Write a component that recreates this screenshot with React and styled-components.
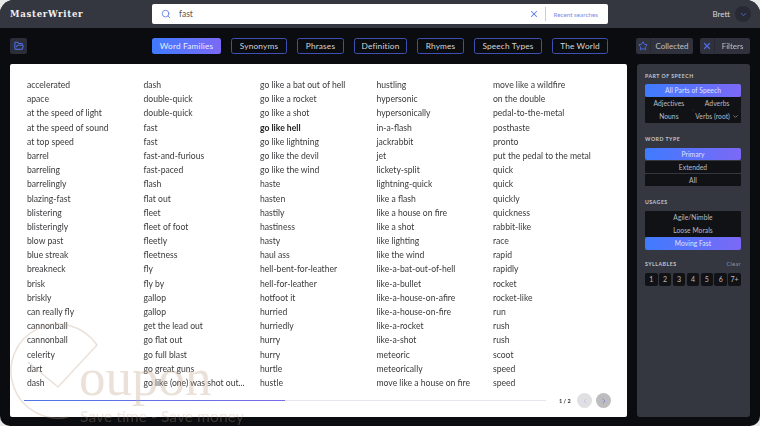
import React from 'react';
import styled, { createGlobalStyle } from 'styled-components';
import { Search, X, ChevronDown, ChevronLeft, ChevronRight, Star, FolderOpen } from 'lucide-react';

const GlobalStyle = createGlobalStyle`
  html, body {
    margin: 0;
    padding: 0;
    background: #e9e9ea;
  }
  * {
    box-sizing: border-box;
  }
`;

const Frame = styled.div`
  position: relative;
  width: 760px;
  height: 426px;
  overflow: hidden;
  display: flex;
  flex-direction: column;
  background: #0b0c0f;
  border-radius: 14px 14px 10px 10px;
  font-family: Lato, 'Open Sans', sans-serif;
  filter: blur(0.35px);
`;

const TopBar = styled.header`
  height: 28px;
  flex: none;
  display: flex;
  align-items: center;
  padding: 0 9px 0 10px;
  background: #343740;
`;

const Logo = styled.div`
  width: 142px;
  font-family: 'DejaVu Serif', serif;
  font-size: 8.6px;
  font-weight: 700;
  letter-spacing: 0.7px;
  color: #f1f1f3;
`;

const SearchBox = styled.div`
  width: 456px;
  height: 20px;
  display: flex;
  align-items: center;
  padding: 0 10px 0 9px;
  background: #fff;
  border-radius: 2px;
  color: #5f79e6;
`;

const SearchText = styled.div`
  flex: 1;
  margin-left: 8px;
  font-size: 8.5px;
  color: #555;
`;

const Divider = styled.div`
  width: 1px;
  height: 14px;
  margin: 0 7px 0 6px;
  background: #c9cbd3;
`;

const RecentLink = styled.div`
  font-size: 6.3px;
  color: #7c8ce6;
`;

const UserBox = styled.div`
  margin-left: auto;
  display: flex;
  align-items: center;
  gap: 5px;
  font-size: 8px;
  color: #d6d7db;
`;

const Avatar = styled.div`
  width: 16px;
  height: 16px;
  display: flex;
  align-items: center;
  justify-content: center;
  border-radius: 50%;
  background: #272a35;
  color: #5f79e6;
`;

const ToolBar = styled.nav`
  height: 36px;
  flex: none;
  display: flex;
  align-items: center;
  padding: 10px;
`;

const FolderButton = styled.div`
  width: 17px;
  height: 16px;
  margin-right: 125px;
  display: flex;
  align-items: center;
  justify-content: center;
  background: #2b2e39;
  border-radius: 2px;
  color: #4f6be0;
`;

const Tabs = styled.div`
  display: flex;
  gap: 10px;
`;

const Tab = styled.div`
  width: ${(p) => p.$width}px;
  height: 16px;
  display: flex;
  align-items: center;
  justify-content: center;
  font-size: 8.3px;
  letter-spacing: 0.15px;
  color: ${(p) => (p.$active ? '#e9ecff' : '#d4d5da')};
  background: ${(p) => (p.$active ? 'linear-gradient(90deg, #3f7bff, #7b69f6)' : 'transparent')};
  border: ${(p) => (p.$active ? 'none' : '1.2px solid #3f50b5')};
  border-radius: 2.5px;
`;

const ToolActions = styled.div`
  margin-left: auto;
  display: flex;
  gap: 7px;
`;

const ActionButton = styled.div`
  width: ${(p) => p.$width}px;
  height: 16px;
  display: flex;
  align-items: center;
  background: #2f323d;
  border-radius: 2px;
  color: #4f6be0;
`;

const ActionIcon = styled.div`
  width: 15px;
  height: 16px;
  flex: none;
  display: flex;
  align-items: center;
  justify-content: center;
  border-right: 1px solid #272a33;
`;

const ActionLabel = styled.div`
  flex: 1;
  text-align: center;
  font-size: 8px;
  color: #bfc0c7;
`;

const Main = styled.main`
  flex: 1;
  display: flex;
  gap: 10px;
  min-height: 0;
  padding: 0 10px 9px 10px;
`;

const ResultsCard = styled.section`
  width: 617px;
  display: flex;
  flex-direction: column;
  padding: 14px 0 0 17px;
  background: #fff;
  border-radius: 2px;
`;

const WordColumns = styled.div`
  display: flex;
`;

const WordColumn = styled.ul`
  width: 116.5px;
  margin: 0;
  padding: 0;
  list-style: none;
`;

const Word = styled.li`
  height: 14.19px;
  line-height: 14.19px;
  font-size: 8.6px;
  white-space: nowrap;
  color: ${(p) => (p.$bold ? '#1c1c1f' : '#3a3a3d')};
  font-weight: ${(p) => (p.$bold ? 700 : 400)};
`;

const PagerRow = styled.div`
  display: flex;
  align-items: center;
  margin: 3px 16px 0 -3px;
`;

const ScrollTrack = styled.div`
  flex: none;
  width: 522px;
  height: 1.5px;
  background: #e6e6f2;
`;

const ScrollFill = styled.div`
  height: 100%;
  background: linear-gradient(90deg, #4d74e8, #7a6bea);
`;

const PageCount = styled.div`
  flex: none;
  width: 11px;
  margin-left: 13px;
  font-size: 5.6px;
  font-weight: 700;
  white-space: nowrap;
  color: #333;
`;

const PageButton = styled.div`
  flex: none;
  width: 15px;
  height: 15px;
  margin-left: ${(p) => p.$gap}px;
  display: flex;
  align-items: center;
  justify-content: center;
  border-radius: 50%;
  background: ${(p) => (p.$enabled ? '#bdbdbf' : '#e0e0e2')};
  color: ${(p) => (p.$enabled ? '#6a75d8' : '#b4bde8')};
`;

const FilterPanel = styled.aside`
  flex: 1;
  padding: 8px 9px 0 8px;
  background: #343740;
  border-radius: 3px;
`;

const GroupLabel = styled.div`
  display: flex;
  justify-content: space-between;
  align-items: center;
  height: 8px;
  margin-bottom: ${(p) => p.$mb || 4}px;
  font-size: 5.2px;
  font-weight: 700;
  letter-spacing: 0.5px;
  color: #c5c6cc;
`;

const ClearLink = styled.span`
  font-weight: 400;
  color: #9a9ba3;
`;

const OptionStack = styled.div`
  display: flex;
  flex-direction: column;
  gap: 0.5px;
  margin-bottom: ${(p) => p.$mb}px;
`;

const OptionPair = styled.div`
  display: flex;
  gap: 0.5px;

  & > * {
    flex: 1 1 0;
  }
`;

const Option = styled.div`
  height: 12.5px;
  display: flex;
  align-items: center;
  justify-content: center;
  gap: 2px;
  font-size: 6.7px;
  letter-spacing: 0.05px;
  white-space: nowrap;
  color: ${(p) => (p.$active ? '#dfe3ff' : '#bcbdc3')};
  background: ${(p) => (p.$active ? 'linear-gradient(90deg, #3f7bff, #7b69f6)' : '#111216')};
  border-radius: ${(p) => (p.$active ? '2px' : '1px')};
`;

const SyllableRow = styled.div`
  display: flex;
  gap: 1.4px;
`;

const Syllable = styled.div`
  width: 12.5px;
  height: 13px;
  display: flex;
  align-items: center;
  justify-content: center;
  font-size: 7px;
  color: #bcbdc3;
  background: #111216;
  border-radius: 2px;
`;

const Watermark = styled.div`
  position: absolute;
  left: 6px;
  top: 320px;
  width: 260px;
  height: 106px;
  pointer-events: none;
`;

const WatermarkWord = styled.div`
  position: absolute;
  left: 73px;
  top: 31px;
  font-family: 'Liberation Serif', serif;
  font-size: 53px;
  line-height: 1;
  color: rgba(190, 165, 140, 0.33);
`;

const WatermarkTagline = styled.div`
  position: absolute;
  left: 74px;
  top: 87px;
  font-size: 15.7px;
  white-space: nowrap;
  color: rgba(190, 165, 140, 0.28);
`;

const columns = [
  ['accelerated', 'apace', 'at the speed of light', 'at the speed of sound', 'at top speed', 'barrel', 'barreling', 'barrelingly', 'blazing-fast', 'blistering', 'blisteringly', 'blow past', 'blue streak', 'breakneck', 'brisk', 'briskly', 'can really fly', 'cannonball', 'cannonball', 'celerity', 'dart', 'dash'],
  ['dash', 'double-quick', 'double-quick', 'fast', 'fast', 'fast-and-furious', 'fast-paced', 'flash', 'flat out', 'fleet', 'fleet of foot', 'fleetly', 'fleetness', 'fly', 'fly by', 'gallop', 'gallop', 'get the lead out', 'go flat out', 'go full blast', 'go great guns', 'go like (one) was shot out...'],
  ['go like a bat out of hell', 'go like a rocket', 'go like a shot', 'go like hell', 'go like lightning', 'go like the devil', 'go like the wind', 'haste', 'hasten', 'hastily', 'hastiness', 'hasty', 'haul ass', 'hell-bent-for-leather', 'hell-for-leather', 'hotfoot it', 'hurried', 'hurriedly', 'hurry', 'hurry', 'hurtle', 'hustle'],
  ['hustling', 'hypersonic', 'hypersonically', 'in-a-flash', 'jackrabbit', 'jet', 'lickety-split', 'lightning-quick', 'like a flash', 'like a house on fire', 'like a shot', 'like lighting', 'like the wind', 'like-a-bat-out-of-hell', 'like-a-bullet', 'like-a-house-on-afire', 'like-a-house-on-fire', 'like-a-rocket', 'like-a-shot', 'meteoric', 'meteorically', 'move like a house on fire'],
  ['move like a wildfire', 'on the double', 'pedal-to-the-metal', 'posthaste', 'pronto', 'put the pedal to the metal', 'quick', 'quick', 'quickly', 'quickness', 'rabbit-like', 'race', 'rapid', 'rapidly', 'rocket', 'rocket-like', 'run', 'rush', 'rush', 'scoot', 'speed', 'speed'],
];

const tabs = [
  { label: 'Word Families', width: 69, active: true },
  { label: 'Synonyms', width: 56 },
  { label: 'Phrases', width: 47 },
  { label: 'Definition', width: 53 },
  { label: 'Rhymes', width: 47 },
  { label: 'Speech Types', width: 68 },
  { label: 'The World', width: 56 },
];

export default function App() {
  return (
    <Frame>
      <GlobalStyle />
      <TopBar>
        <Logo>MasterWriter</Logo>
        <SearchBox>
          <Search size={10} />
          <SearchText>fast</SearchText>
          <X size={10} strokeWidth={2.5} />
          <Divider />
          <RecentLink>Recent searches</RecentLink>
        </SearchBox>
        <UserBox>
          Brett
          <Avatar>
            <ChevronDown size={9} />
          </Avatar>
        </UserBox>
      </TopBar>
      <ToolBar>
        <FolderButton>
          <FolderOpen size={10} strokeWidth={2.6} />
        </FolderButton>
        <Tabs>
          {tabs.map((tab) => (
            <Tab key={tab.label} $width={tab.width} $active={tab.active}>
              {tab.label}
            </Tab>
          ))}
        </Tabs>
        <ToolActions>
          <ActionButton $width={57}>
            <ActionIcon>
              <Star size={10} strokeWidth={2.4} />
            </ActionIcon>
            <ActionLabel>Collected</ActionLabel>
          </ActionButton>
          <ActionButton $width={50}>
            <ActionIcon>
              <X size={10} strokeWidth={3} />
            </ActionIcon>
            <ActionLabel>Filters</ActionLabel>
          </ActionButton>
        </ToolActions>
      </ToolBar>
      <Main>
        <ResultsCard>
          <WordColumns>
            {columns.map((words, i) => (
              <WordColumn key={i}>
                {words.map((word, j) => (
                  <Word key={j} $bold={word === 'go like hell'}>
                    {word}
                  </Word>
                ))}
              </WordColumn>
            ))}
          </WordColumns>
          <PagerRow>
            <ScrollTrack>
              <ScrollFill style={{ width: '50%' }} />
            </ScrollTrack>
            <PageCount>1 / 2</PageCount>
            <PageButton $gap={7}>
              <ChevronLeft size={8} />
            </PageButton>
            <PageButton $gap={4} $enabled>
              <ChevronRight size={8} />
            </PageButton>
          </PagerRow>
        </ResultsCard>
        <FilterPanel>
          <GroupLabel>PART OF SPEECH</GroupLabel>
          <OptionStack $mb={12}>
            <Option $active>All Parts of Speech</Option>
            <OptionPair>
              <Option>Adjectives</Option>
              <Option>Adverbs</Option>
            </OptionPair>
            <OptionPair>
              <Option>Nouns</Option>
              <Option>
                Verbs (root)
                <ChevronDown size={7} />
              </Option>
            </OptionPair>
          </OptionStack>
          <GroupLabel $mb={5}>WORD TYPE</GroupLabel>
          <OptionStack $mb={12}>
            <Option $active>Primary</Option>
            <Option>Extended</Option>
            <Option>All</Option>
          </OptionStack>
          <GroupLabel $mb={5}>USAGES</GroupLabel>
          <OptionStack $mb={10}>
            <Option>Agile/Nimble</Option>
            <Option>Loose Morals</Option>
            <Option $active>Moving Fast</Option>
          </OptionStack>
          <GroupLabel $mb={5}>
            SYLLABLES
            <ClearLink>Clear</ClearLink>
          </GroupLabel>
          <SyllableRow>
            {['1', '2', '3', '4', '5', '6', '7+'].map((n) => (
              <Syllable key={n}>{n}</Syllable>
            ))}
          </SyllableRow>
        </FilterPanel>
      </Main>
      <Watermark>
        <svg width="100" height="106" viewBox="0 0 100 106" fill="none" stroke="rgba(190,165,140,0.33)" strokeWidth="1.5">
          <path d="M91 25 A47 47 0 1 0 62 97" />
          <path d="M22 42 L52 67 L91 25" />
        </svg>
        <WatermarkWord>oupon</WatermarkWord>
        <WatermarkTagline>Save time - Save money</WatermarkTagline>
      </Watermark>
    </Frame>
  );
}
